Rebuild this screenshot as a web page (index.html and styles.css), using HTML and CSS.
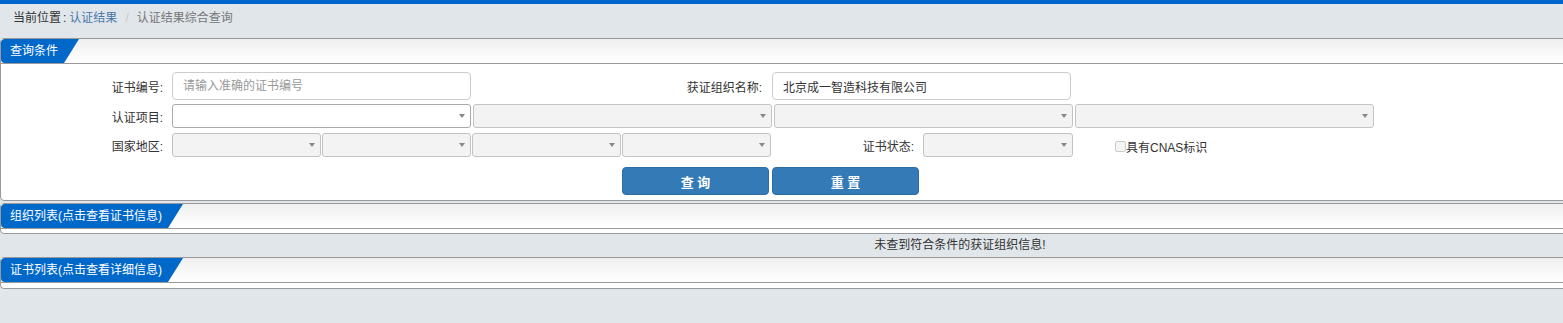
FILE: index.html
```html
<!DOCTYPE html>
<html lang="zh-CN">
<head>
  <meta charset="UTF-8">
  <title>认证结果综合查询</title>
  <link rel="stylesheet" href="styles.css">
</head>
<body>
  <div class="topbar"></div>
  <div class="page">
    <div class="crumb">
      当前位置<span class="colon">:</span><a href="#">认证结果</a><span class="sep">/</span><span class="cur">认证结果综合查询</span>
    </div>

    <div class="panel panel-query">
      <div class="panel-head"><span class="tab">查询条件</span></div>
      <div class="panel-body">
        <div class="row row1">
          <label class="lbl">证书编号:</label>
          <input class="txt" type="text" placeholder="请输入准确的证书编号">
          <label class="lbl lbl-wide">获证组织名称:</label>
          <input class="txt" type="text" value="北京成一智造科技有限公司">
        </div>
        <div class="row row2">
          <label class="lbl">认证项目:</label>
          <span class="sel-wrap w-long"><select class="sel"></select></span>
          <span class="sel-wrap w-long"><select class="sel" disabled></select></span>
          <span class="sel-wrap w-long"><select class="sel" disabled></select></span>
          <span class="sel-wrap w-long"><select class="sel" disabled></select></span>
        </div>
        <div class="row row3">
          <label class="lbl">国家地区:</label>
          <span class="sel-wrap w-short"><select class="sel" disabled></select></span>
          <span class="sel-wrap w-short"><select class="sel" disabled></select></span>
          <span class="sel-wrap w-short"><select class="sel" disabled></select></span>
          <span class="sel-wrap w-short"><select class="sel" disabled></select></span>
          <label class="lbl lbl-mid">证书状态:</label>
          <span class="sel-wrap w-status"><select class="sel" disabled></select></span>
          <label class="cnas"><input type="checkbox" class="chk">具有CNAS标识</label>
        </div>
        <div class="row btns">
          <button class="btn">查 询</button>
          <button class="btn">重 置</button>
        </div>
      </div>
    </div>

    <div class="panel panel-list">
      <div class="panel-head"><span class="tab">组织列表(点击查看证书信息)</span></div>
      <div class="panel-body"></div>
    </div>
    <div class="empty-msg">未查到符合条件的获证组织信息!</div>

    <div class="panel panel-list last">
      <div class="panel-head"><span class="tab">证书列表(点击查看详细信息)</span></div>
      <div class="panel-body"></div>
    </div>
  </div>
</body>
</html>
```

FILE: styles.css
```css
html, body {
  margin: 0;
  overflow: hidden;
}
body {
  background-color: #e1e6ea;
  color: #333;
  font-family: "Liberation Sans", "Noto Sans CJK SC", sans-serif;
  font-size: 12px;
}
.topbar {
  height: 4px;
  background-color: #0066cc;
}
.page {
  width: 1920px;
}
.crumb {
  padding: 4px 0 10px 13px;
  line-height: 20px;
  color: #333;
}
.crumb .colon {
  padding: 0 3px 0 2px;
}
.crumb a {
  color: #4a78a8;
  text-decoration: none;
}
.crumb .sep {
  color: #c8c8c8;
  padding: 0 8px;
}
.crumb .cur {
  color: #777;
}

.panel {
  background-color: #fff;
  border: 1px solid #999;
  border-radius: 4px;
  box-sizing: border-box;
}
.panel-head {
  height: 24px;
  border-bottom: 1px solid #999;
  background: linear-gradient(#efefef, #fff);
}
.tab {
  display: inline-block;
  height: 24px;
  line-height: 24px;
  padding: 0 21px 0 9px;
  background-color: #0068c9;
  color: #fff;
  border-radius: 4px 0 0 4px;
  clip-path: polygon(0 0, 100% 0, calc(100% - 15px) 100%, 0 100%);
}

.panel-query {
  margin-bottom: 2px;
}
.panel-query .panel-body {
  padding: 8px 0 5px;
}
.row {
  display: flex;
  align-items: center;
}
.row1 {
  height: 28px;
}
.row2 {
  height: 24px;
  margin-top: 4px;
}
.row3 {
  height: 24px;
  margin-top: 5px;
}
.lbl {
  width: 171px;
  box-sizing: border-box;
  padding-right: 9px;
  text-align: right;
  color: #333;
}
.lbl-wide {
  width: 301px;
  padding-right: 10px;
}
.lbl-mid {
  width: 151px;
  padding-right: 9px;
}
.txt {
  width: 299px;
  height: 28px;
  box-sizing: border-box;
  border: 1px solid #ccc;
  border-radius: 4px;
  padding: 0 10px;
  font: inherit;
  color: #333;
  outline: none;
}
.txt::placeholder {
  color: #999;
}

.sel-wrap {
  position: relative;
  display: block;
  height: 24px;
}
.sel-wrap::after {
  content: "";
  position: absolute;
  right: 6px;
  top: 10px;
  border-left: 3px solid transparent;
  border-right: 3px solid transparent;
  border-top: 4px solid #888;
}
.w-long {
  width: 299px;
  margin-right: 2px;
}
.w-short {
  width: 149px;
  margin-right: 1px;
}
.w-status {
  width: 150px;
}
.sel {
  appearance: none;
  width: 100%;
  height: 100%;
  box-sizing: border-box;
  border: 1px solid #aaa;
  border-radius: 3px;
  background-color: #fff;
  margin: 0;
  font: inherit;
}
.sel:disabled {
  background-color: #eee;
}

.cnas {
  display: flex;
  align-items: center;
  margin-left: 42px;
  padding-top: 2px;
  color: #333;
}
.chk {
  appearance: none;
  width: 11px;
  height: 11px;
  margin: 0;
  border: 1px solid #ccc;
  border-radius: 2px;
  background-color: #f4f4f4;
}

.btns {
  margin-top: 10px;
  padding-left: 621px;
  gap: 3px;
}
.btn {
  width: 147px;
  height: 28px;
  border: 1px solid #2e6da4;
  border-radius: 4px;
  background-color: #337ab7;
  color: #fff;
  font-family: inherit;
  font-size: 13px;
  font-weight: bold;
  cursor: pointer;
}

.panel-list .panel-body {
  height: 4px;
}
.panel-list.last .panel-body {
  height: 5px;
}
.empty-msg {
  height: 23px;
  line-height: 23px;
  text-align: center;
  color: #333;
}
```
